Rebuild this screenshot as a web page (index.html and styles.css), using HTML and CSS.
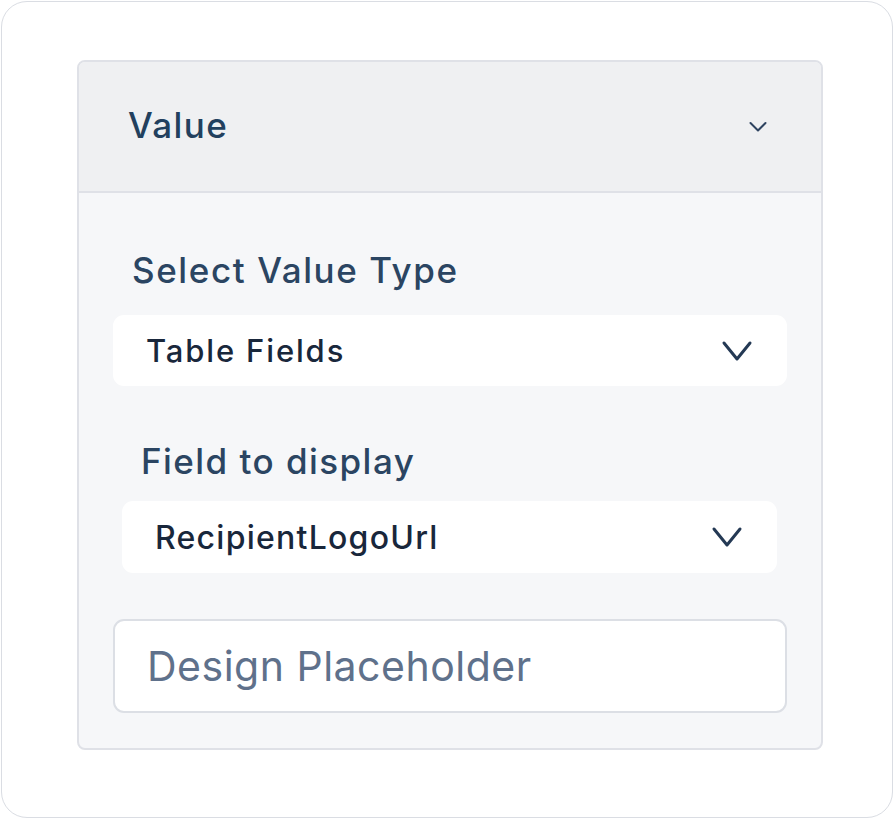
FILE: index.html
```html
<!DOCTYPE html>
<html lang="en">
<head>
<meta charset="utf-8">
<title>Value</title>
<link rel="stylesheet" href="styles.css">
</head>
<body>
<div class="frame">
  <section class="panel">
    <header class="panel-head">
      <span class="panel-title">Value</span>
      <svg class="chev-sm" width="20" height="14" viewBox="0 0 20 14" aria-hidden="true"><path d="M2.5 3 L10 10.5 L17.5 3" fill="none" stroke="#2e4360" stroke-width="2" stroke-linecap="round" stroke-linejoin="round"/></svg>
    </header>
    <div class="panel-body">
      <div class="label label-type">Select Value Type</div>
      <div class="select select-type">
        <span class="select-text">Table Fields</span>
        <svg class="chev" width="32" height="24" viewBox="0 0 32 24" aria-hidden="true"><path d="M3 4 L16 20 L29 4" fill="none" stroke="#243954" stroke-width="3" stroke-linecap="round" stroke-linejoin="round"/></svg>
      </div>
      <div class="label label-field">Field to display</div>
      <div class="select select-field">
        <span class="select-text">RecipientLogoUrl</span>
        <svg class="chev" width="32" height="24" viewBox="0 0 32 24" aria-hidden="true"><path d="M3 4 L16 20 L29 4" fill="none" stroke="#243954" stroke-width="3" stroke-linecap="round" stroke-linejoin="round"/></svg>
      </div>
      <div class="input">Design Placeholder</div>
    </div>
  </section>
</div>
</body>
</html>
```
FILE: styles.css
```css
* { box-sizing: border-box; }
html, body { margin: 0; padding: 0; background: #ffffff; }
body {
  font-family: Inter, "Noto Sans", sans-serif;
  width: 894px;
  height: 819px;
  padding: 1px;
}
.frame {
  width: 892px;
  height: 817px;
  border: 1.5px solid #dadde3;
  border-radius: 26px;
  padding: 58px 0 0 75px;
}
.panel {
  width: 746px;
  border: 2px solid #dfe1e7;
  border-radius: 8px;
  overflow: hidden;
  background: #f6f7f9;
}
.panel-head {
  height: 131px;
  background: #eff0f2;
  border-bottom: 2px solid #dfe1e7;
  display: flex;
  align-items: center;
  justify-content: space-between;
  padding: 0 53px 0 49px;
}
.panel-title {
  font-size: 35px;
  font-weight: 500;
  color: #22405e;
  letter-spacing: 1.4px;
  margin-top: -3px;
}
.chev-sm { margin-top: 0; }
.panel-body {
  padding: 56px 34px 35px 34px;
  display: flex;
  flex-direction: column;
}
.label {
  font-size: 35px;
  font-weight: 500;
  color: #2b4562;
  line-height: 42px;
}
.label-type { margin-left: 19px; letter-spacing: 1.6px; }
.label-field { margin-left: 28px; margin-top: 54px; letter-spacing: 1.45px; }
.select {
  background: #ffffff;
  border-radius: 11px;
  display: flex;
  align-items: center;
  justify-content: space-between;
}
.select-type {
  height: 71px;
  margin-top: 24px;
  padding: 0 34px 0 33px;
}
.select-field {
  height: 72px;
  margin: 19px 10px 0 9px;
  padding: 0 34px 0 33px;
}
.select-text {
  font-size: 31px;
  font-weight: 500;
  color: #19273b;
}
.select-type .select-text { letter-spacing: 1.85px; }
.select-field .select-text { font-size: 32px; letter-spacing: 1.25px; }
.chev { display: block; }
.input {
  margin-top: 46px;
  height: 94px;
  background: #ffffff;
  border: 2px solid #dcdfe5;
  border-radius: 11px;
  display: flex;
  align-items: center;
  padding: 0 32px;
  font-size: 41px;
  letter-spacing: 0.5px;
  color: #5f718b;
}
```
